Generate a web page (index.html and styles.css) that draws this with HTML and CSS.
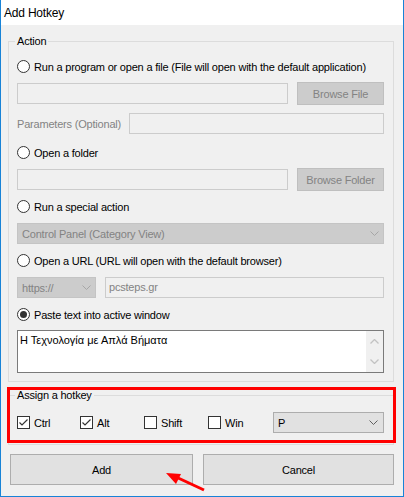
FILE: index.html
```html
<!DOCTYPE html>
<html lang="en">
  <head>
    <meta charset="utf-8">
    <title>Add Hotkey</title>
    <link rel="stylesheet" href="styles.css">
  </head>
  <body>
    <div class="window">
      <div class="titlebar">Add Hotkey</div>
      <div class="client">
        <fieldset class="group action">
          <legend>Action</legend>
          <div class="option"><span class="radio"></span>Run a program or open a file (File will open with the default application)</div>
          <div class="file-row">
            <span class="textbox"></span>
            <span class="btn disabled">Browse File</span>
          </div>
          <div class="param-row">
            <span class="dim">Parameters (Optional)</span>
            <span class="textbox"></span>
          </div>
          <div class="option loose"><span class="radio"></span>Open a folder</div>
          <div class="file-row">
            <span class="textbox"></span>
            <span class="btn disabled">Browse Folder</span>
          </div>
          <div class="option tight"><span class="radio"></span>Run a special action</div>
          <div class="combo disabled">
            <span>Control Panel (Category View)</span>
            <svg class="chevron" width="9" height="5" viewBox="0 0 9 5"><polyline points="0.5,0.5 4.5,4.5 8.5,0.5" /></svg>
          </div>
          <div class="option"><span class="radio"></span>Open a URL (URL will open with the default browser)</div>
          <div class="url-row">
            <div class="combo disabled">
              <span>https://</span>
              <svg class="chevron" width="9" height="5" viewBox="0 0 9 5"><polyline points="0.5,0.5 4.5,4.5 8.5,0.5" /></svg>
            </div>
            <span class="textbox">pcsteps.gr</span>
          </div>
          <div class="option"><span class="radio on"></span>Paste text into active window</div>
          <div class="memo tight">
            <span class="memo-text">Η Τεχνολογία με Απλά Βήματα</span>
            <div class="scrollbar">
              <svg width="9" height="5" viewBox="0 0 9 5"><polyline points="0.5,4.5 4.5,0.5 8.5,4.5" /></svg>
              <svg width="9" height="5" viewBox="0 0 9 5"><polyline points="0.5,0.5 4.5,4.5 8.5,0.5" /></svg>
            </div>
          </div>
        </fieldset>

        <fieldset class="group hotkey">
          <legend>Assign a hotkey</legend>
          <div class="keys">
            <div class="check-item"><span class="check on"><svg width="11" height="11" viewBox="0 0 11 11"><polyline points="1.5,5.5 4,8 9.5,2.5" /></svg></span>Ctrl</div>
            <div class="check-item"><span class="check on"><svg width="11" height="11" viewBox="0 0 11 11"><polyline points="1.5,5.5 4,8 9.5,2.5" /></svg></span>Alt</div>
            <div class="check-item"><span class="check"></span>Shift</div>
            <div class="check-item"><span class="check"></span>Win</div>
            <div class="combo key">
              <span>P</span>
              <svg class="chevron" width="9" height="5" viewBox="0 0 9 5"><polyline points="0.5,0.5 4.5,4.5 8.5,0.5" /></svg>
            </div>
          </div>
        </fieldset>

        <div class="buttons">
          <span class="btn">Add</span>
          <span class="btn">Cancel</span>
        </div>
      </div>

      <!-- annotation overlays -->
      <div class="highlight"></div>
      <svg class="arrow" width="404" height="497" viewBox="0 0 404 497">
        <line x1="204" y1="490" x2="176" y2="477" />
        <polygon points="166,473 181,474 176,484" />
      </svg>
    </div>
  </body>
</html>
```

FILE: styles.css
```css
body {
  margin: 0;
  font-family: "Liberation Sans", Arial, sans-serif;
  font-size: 11px;
  letter-spacing: -0.2px;
  color: #000;
}
.window {
  position: relative;
  width: 404px;
  height: 497px;
  box-sizing: border-box;
  border: 1px solid #1883d7;
  border-top: 0;
  background: #f0f0f0;
}
.titlebar {
  height: 25px;
  line-height: 26px;
  padding-left: 3px;
  font-size: 12px;
  background: #fff;
}
.client {
  padding: 9px 9px 0 7px;
}

/* group boxes */
.group {
  margin: 0;
  min-width: 0;
  border: 1px solid #dcdcdc;
  display: flex;
  flex-direction: column;
}
.group legend {
  padding: 0 2px;
  margin-left: -2px;
  line-height: 15px;
}
.action {
  padding: 9px 9px 8px 8px;
  gap: 8px;
}
.hotkey {
  margin-top: 6px;
  padding: 9px 9px 11px 8px;
}
.tight {
  margin-top: -1px;
}
.loose {
  margin-top: 2px;
}

/* radio options */
.option {
  display: flex;
  align-items: center;
  gap: 4px;
  height: 17px;
  white-space: nowrap;
}
.radio {
  position: relative;
  flex: none;
  width: 13px;
  height: 13px;
  box-sizing: border-box;
  border: 1px solid #333;
  border-radius: 50%;
  background: #fff;
}
.radio.on::after {
  content: "";
  position: absolute;
  inset: 2px;
  border-radius: 50%;
  background: #333;
}

/* text boxes, buttons */
.textbox {
  box-sizing: border-box;
  height: 21px;
  border: 1px solid #ccc;
  background: #f0f0f0;
  color: #838383;
  padding-left: 3px;
  line-height: 19px;
}
.btn {
  box-sizing: border-box;
  display: flex;
  align-items: center;
  justify-content: center;
  border: 1px solid #adadad;
  background: #e1e1e1;
  white-space: nowrap;
}
.btn.disabled {
  border-color: #bfbfbf;
  background: #ccc;
  color: #838383;
}
.file-row {
  display: grid;
  grid-template-columns: 271px 87px;
  gap: 9px;
  align-items: center;
  height: 23px;
  margin-top: -1px;
}
.file-row .btn {
  height: 23px;
}
.param-row {
  display: grid;
  grid-template-columns: 112px 1fr;
  align-items: center;
  height: 21px;
  white-space: nowrap;
}
.dim {
  color: #838383;
}
.url-row {
  display: grid;
  grid-template-columns: 79px 1fr;
  gap: 9px;
}

/* combo boxes */
.combo {
  box-sizing: border-box;
  height: 21px;
  display: flex;
  align-items: center;
  justify-content: space-between;
  padding: 0 4px 0 4px;
  border: 1px solid #adadad;
  background: #e1e1e1;
}
.combo.disabled {
  border-color: #c4c4c4;
  background: #ccc;
  color: #838383;
}
.chevron polyline {
  fill: none;
  stroke: #606060;
  stroke-width: 1;
}
.combo.disabled .chevron polyline {
  stroke: #a6a6a6;
}

/* text area */
.memo {
  box-sizing: border-box;
  height: 43px;
  display: flex;
  justify-content: space-between;
  border: 1px solid #7a7a7a;
  background: #fff;
}
.memo-text {
  padding: 3px 0 0 2px;
  font-size: 11px;
  letter-spacing: 0;
}
.scrollbar {
  width: 17px;
  background: #f0f0f0;
  display: flex;
  flex-direction: column;
  align-items: center;
  justify-content: space-between;
  padding: 8px 0 8px;
  box-sizing: border-box;
}
.scrollbar polyline {
  fill: none;
  stroke: #c2c2c2;
  stroke-width: 1.3;
}

/* hotkey row */
.keys {
  display: grid;
  grid-template-columns: 63px 64px 64px 65px 1fr;
  align-items: center;
  height: 21px;
}
.check-item {
  display: flex;
  align-items: center;
  gap: 4px;
}
.check {
  width: 13px;
  height: 13px;
  box-sizing: border-box;
  border: 1px solid #333;
  background: #fff;
}
.check svg {
  display: block;
}
.check polyline {
  fill: none;
  stroke: #333;
  stroke-width: 1.2;
}
.combo.key {
  padding-left: 4px;
  padding-right: 5px;
}

/* dialog buttons */
.buttons {
  display: grid;
  grid-template-columns: 183px 191px;
  gap: 10px;
  margin-top: 9px;
  padding-left: 2px;
}
.buttons .btn {
  height: 31px;
}

/* red annotation */
.highlight {
  position: absolute;
  left: 6px;
  top: 387px;
  width: 389px;
  height: 56px;
  box-sizing: border-box;
  border: 3px solid #f00;
}
.arrow {
  position: absolute;
  left: -1px;
  top: 0;
}
.arrow line {
  stroke: #f00;
  stroke-width: 3;
}
.arrow polygon {
  fill: #f00;
}
```
